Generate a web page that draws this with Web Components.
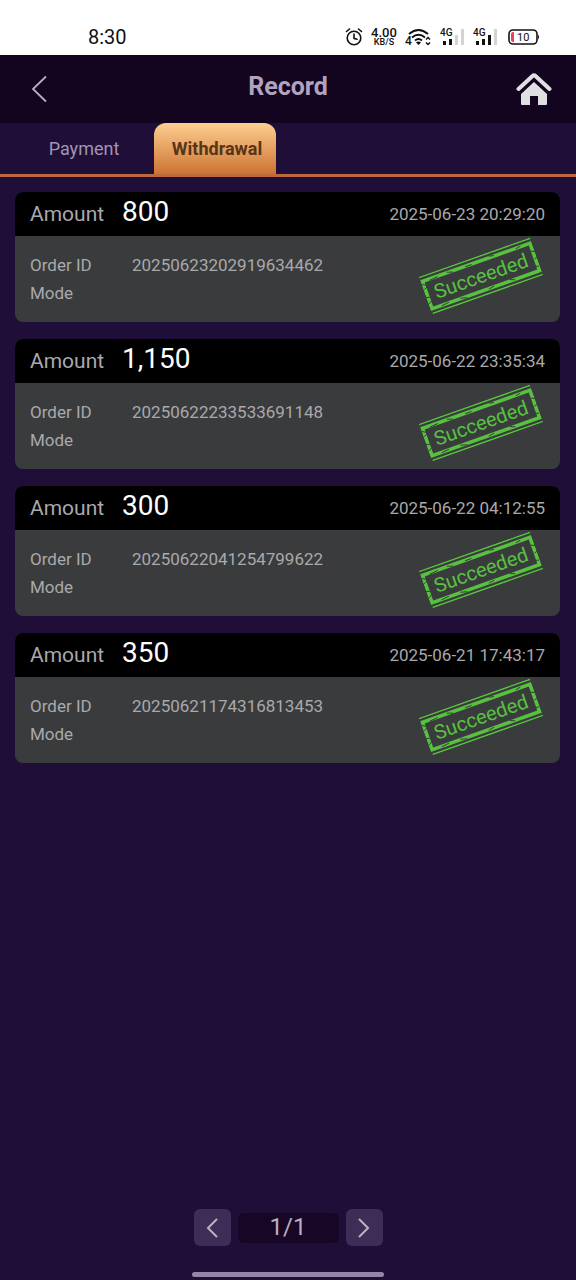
<!DOCTYPE html>
<html lang="en">
<head>
<meta charset="utf-8">
<meta name="viewport" content="width=device-width, initial-scale=1">
<title>Record</title>
<style>
  html { background: #1f0e38; }
  body { margin: 0; font-family: Roboto, "Liberation Sans", sans-serif; color: #a9a9ac; }
</style>
</head>
<body>
<record-page></record-page>

<script>
const define = (name, html, setup) => {
  const template = document.createElement('template');
  template.innerHTML = '<style>*{box-sizing:border-box}button{font:inherit;color:inherit;border:0;padding:0;background:none;cursor:pointer}svg{display:block}</style>' + html;
  customElements.define(name, class extends HTMLElement {
    constructor() {
      super();
      this.attachShadow({ mode: 'open' }).append(template.content.cloneNode(true));
    }
    connectedCallback() { if (setup) setup(this, this.shadowRoot); }
  });
};

define('status-bar', `
  <style>
    :host { display: flex; justify-content: space-between; align-items: center; height: 55px;
      padding: 18px 36px 0 88px; box-sizing: border-box; background: #fff; color: #111; font-size: 20px; }
    .icons { display: flex; align-items: center; }
    .speed { display: flex; flex-direction: column; align-items: center; width: 28px; margin: 0 7px 0 7px; font-weight: 500; }
    .speed b { font-size: 13px; line-height: 11px; font-weight: 500; }
    .speed small { font-size: 9px; line-height: 9px; }
    .sim { margin-left: 8px; }
    .battery { margin-left: 10px; }
    svg text { font-family: Roboto, sans-serif; fill: #111; }
  </style>
  <span>8:30</span>
  <div class="icons">
    <svg width="18" height="20" viewBox="0 0 18 20" fill="none" stroke="#111" stroke-width="1.6" stroke-linecap="round">
      <circle cx="9" cy="11" r="6.8"/><path d="M9 7v4.300l3 1M1.500 4.500l3-2.500M16.500 4.500l-3-2.500"/>
    </svg>
    <div class="speed"><b>4.00</b><small>KB/S</small></div>
    <svg width="27" height="20" viewBox="0 0 27 20" fill="none" stroke="#111" stroke-width="2">
      <path d="M4 7q9.500-8 19 0M7 10.500q6.500-5.500 13 0M10 13.500q3.500-3 7 0"/>
      <path d="M11 15.500q2.500-2 5 0L13.500 18z" fill="#111" stroke="none"/>
      <path d="M21 12.500l2-2 2 2M21 15.500l2 2 2-2" stroke-width="1.500"/>
      <text x="0" y="18" font-size="12" font-weight="500" stroke="none">4</text>
    </svg>
    <svg class="sim" width="25" height="20" viewBox="0 0 25 20">
      <text x="0" y="9" font-size="10" font-weight="500">4G</text>
      <path d="M3 14h3v4H3zM9 12h3v6H9z" fill="#111"/><path d="M15 8h3v10h-3zM21 2h3v16h-3z" fill="#d4d4d4"/>
    </svg>
    <svg class="sim" width="25" height="20" viewBox="0 0 25 20">
      <text x="0" y="9" font-size="10" font-weight="500">4G</text>
      <path d="M3 14h3v4H3zM9 12h3v6H9zM15 8h3v10h-3z" fill="#111"/><path d="M21 2h3v16h-3z" fill="#d4d4d4"/>
    </svg>
    <svg class="battery" width="32" height="18" viewBox="0 0 32 18">
      <rect x="1" y="2" width="28" height="14" rx="4" fill="none" stroke="#111" stroke-width="1.6"/>
      <path d="M30 6.500q2 2.500 0 5z" fill="#111"/>
      <path d="M6 4H5Q3 4 3 6v6q0 2 2 2h1z" fill="#ee4058"/>
      <text x="9" y="13" font-size="11">10</text>
    </svg>
  </div>`);

define('page-header', `
  <style>
    :host { display: grid; grid-template-columns: 1fr auto 1fr; align-items: center; height: 68px; background: #13041f; }
    h1 { margin: 0; font-size: 25px; line-height: 32px; font-weight: 700; color: #b1a3be; padding-bottom: 4px; }
    .back { justify-self: start; margin-left: 28px; }
    .home { justify-self: end; margin-right: 24px; }
  </style>
  <button class="back" aria-label="Back"><svg width="24" height="30" viewBox="0 0 24 30" fill="none" stroke="#b9adc5" stroke-width="1.800"><path d="M18 2.500L5 15l13 12.500"/></svg></button>
  <h1><slot></slot></h1>
  <button class="home" aria-label="Home"><svg width="36" height="34" viewBox="0 0 36 34">
    <path d="M2.500 17L16.500 4q1.500-1.400 3 0l14 13" fill="none" stroke="#e0dfe2" stroke-width="4" stroke-linecap="round" stroke-linejoin="round"/>
    <path d="M18 10L31 22v10q0 1-1 1h-8v-9h-8v9H6q-1 0-1-1V22z" fill="#e0dfe2"/>
  </svg></button>`);

define('record-tabs', `
  <style>
    :host { display: flex; height: 54px; padding-left: 14px; box-sizing: border-box; border-bottom: 3px solid #bb693c; background: #1f0e38; }
    button { width: 140px; height: 51px; font-size: 18px; color: #a195b3; }
    button[aria-selected=true] { width: 122px; padding-left: 4px; font-weight: 700; color: #563518; border-radius: 12px 12px 0 0; background: linear-gradient(#fdcf91, #cd7332); }
    div { display: flex; }
  </style>
  <div role="tablist"><button role="tab" aria-selected="false">Payment</button><button role="tab" aria-selected="true">Withdrawal</button></div>`);

define('status-stamp', `
  <style>
    :host { display: grid; width: 118px; height: 40px; place-items: center; color: #57c23f; font-size: 20px; line-height: 24px; transform: rotate(-19.5deg); }
    svg, span { grid-area: 1 / 1; }
  </style>
  <svg width="118" height="40" viewBox="0 0 118 40" fill="none" stroke="#57c23f">
    <path d="M0 .8h118M1 39.200h117" stroke-width="1.500"/>
    <path d="M2 5.500h114v29H2z" stroke-width="3.600"/>
    <path d="M0 8l5 3M1 14l4-2M0 22l4 1M1 29l3-2M9 7l9-1M28 5l6 2M47 6h7M12 35l8-1M32 34l7 2M62 35l6-1M85 33l5 2M114 13l4 2M115 22l3-1M113 29l4 1M73 4l5 1M101 6l5-1" stroke="#3a3b3d" stroke-width=".9"/>
  </svg>
  <span><slot></slot></span>`);

define('record-card', `
  <style>
    :host { display: block; border-radius: 8px; overflow: hidden; background: #3a3b3d; }
    header { display: flex; align-items: center; height: 44px; padding: 0 15px; background: #000; font-size: 17px; }
    .label { width: 92px; font-size: 21px; }
    strong { flex: 1; font-size: 28px; line-height: 32px; font-weight: 400; color: #fff; padding-bottom: 4px; }
    .body { position: relative; height: 86px; padding: 15px; font-size: 17px; line-height: 28px; }
    dl { display: grid; grid-template-columns: 102px 1fr; grid-auto-rows: 28px; margin: 0; }
    dd { margin: 0; }
    status-stamp { position: absolute; right: 20px; top: 20px; }
  </style>
  <header><span class="label">Amount</span><strong></strong><time></time></header>
  <div class="body">
    <dl><dt>Order ID</dt><dd></dd><dt>Mode</dt></dl>
    <status-stamp><slot></slot></status-stamp>
  </div>`, (host, root) => {
    root.querySelector('strong').textContent = host.getAttribute('amount');
    root.querySelector('time').textContent = host.getAttribute('time');
    root.querySelector('dd').textContent = host.getAttribute('order');
  });

define('record-pager', `
  <style>
    :host { display: flex; justify-content: center; align-items: center; gap: 7px; color: #b9aebf; }
    button { display: grid; place-items: center; width: 37px; height: 37px; border-radius: 6px; background: #3d2d57; }
    span { width: 101px; height: 30px; border-radius: 6px; background: #180626; text-align: center; font-size: 24px; line-height: 28px; }
  </style>
  <button aria-label="Previous page"><svg width="14" height="20" viewBox="0 0 14 20" fill="none" stroke="#bdb2c2" stroke-width="2"><path d="M12 1L3 10l9 9"/></svg></button>
  <span>1/1</span>
  <button aria-label="Next page"><svg width="14" height="20" viewBox="0 0 14 20" fill="none" stroke="#bdb2c2" stroke-width="2"><path d="M2 1l9 9-9 9"/></svg></button>`);

define('record-page', `
  <style>
    :host { display: flex; flex-direction: column; min-height: 100vh; background: #1f0e38; }
    main { flex: 1; display: flex; flex-direction: column; gap: 17px; padding: 15px 16px 32px 15px; }
    .handle { width: 192px; height: 5px; margin: 26px auto 3px; border-radius: 3px; background: #9586a6; }
  </style>
  <status-bar></status-bar>
  <page-header>Record</page-header>
  <record-tabs></record-tabs>
  <main>
    <record-card amount="800" time="2025-06-23 20:29:20" order="20250623202919634462">Succeeded</record-card>
    <record-card amount="1,150" time="2025-06-22 23:35:34" order="20250622233533691148">Succeeded</record-card>
    <record-card amount="300" time="2025-06-22 04:12:55" order="20250622041254799622">Succeeded</record-card>
    <record-card amount="350" time="2025-06-21 17:43:17" order="20250621174316813453">Succeeded</record-card>
  </main>
  <record-pager></record-pager>
  <div class="handle"></div>`);
</script>
</body>
</html>
